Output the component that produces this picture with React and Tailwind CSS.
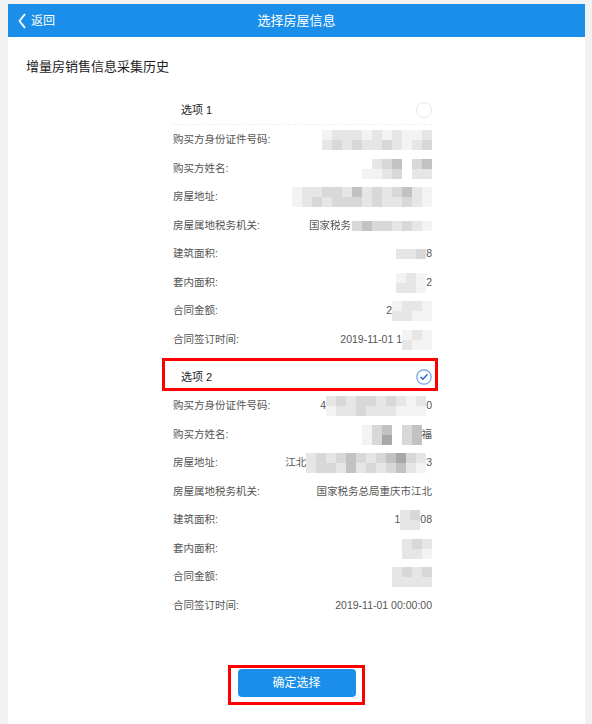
import React from 'react';

const A = 'bg-[#f3f3f3]';
const B = 'bg-[#e6e6e6]';
const C = 'bg-[#d8d8d8]';
const D = 'bg-[#c2c2c2]';
const E = 'bg-[#a8a8a8]';
const W = 'bg-white';

function Mosaic({ rows }) {
  return (
    <div className="flex flex-col blur-[0.5px]">
      {rows.map((r, i) => (
        <div key={i} className="flex">
          {r.map((c, j) => (
            <div key={j} className={`w-[10px] h-[10px] ${c}`} />
          ))}
        </div>
      ))}
    </div>
  );
}

function Row({ label, children }) {
  return (
    <div className="flex h-[28.5px] items-center justify-between pl-[1px]">
      <span className="text-[10.5px] text-[#555]">{label}</span>
      <div className="flex items-center text-[10.5px] text-[#555]">{children}</div>
    </div>
  );
}

function EmptyCircle() {
  return <div className="w-[16px] h-[16px] rounded-full border border-[#e6e6e6]" />;
}

function CheckCircle() {
  return (
    <svg width="16" height="16" viewBox="0 0 16 16">
      <circle cx="8" cy="8" r="7.2" fill="white" stroke="#6a9fe0" strokeWidth="1.2" />
      <path d="M5 8.3 L7 10.2 L11 5.8" fill="none" stroke="#2f6fd3" strokeWidth="1.6" strokeLinecap="round" strokeLinejoin="round" />
    </svg>
  );
}

export default function App() {
  return (
    <div className="min-h-screen bg-[#f2f2f2] pt-[4px] pl-[8px] pr-[7px] font-['Liberation_Sans','Noto_Sans_CJK_SC',sans-serif]">
      <div className="bg-white h-[720px] flex flex-col">
        <div className="h-[33px] bg-[#1a8ee8] grid grid-cols-[1fr_auto_1fr] items-center text-white">
          <div className="flex items-center pl-[10px] gap-[5px]">
            <svg width="8" height="16" viewBox="0 0 8 16">
              <path d="M7 1 L1.5 8 L7 15" fill="none" stroke="white" strokeWidth="2" strokeLinejoin="round" />
            </svg>
            <span className="text-[12px]">返回</span>
          </div>
          <div className="text-[13px]">选择房屋信息</div>
          <div />
        </div>

        <div className="pt-[20px] pl-[18px] text-[13px] leading-[20px] text-[#222]">增量房销售信息采集历史</div>

        <div className="mt-[19px] ml-[164px] w-[260px]">
          <div className="h-[29px] flex items-center justify-between border-b border-dashed border-[#f0f0f0] pl-[9px]">
            <span className="text-[11px] text-[#222]">选项 1</span>
            <EmptyCircle />
          </div>
          <div className="pt-[1px]">
            <Row label="购买方身份证件号码:">
              <Mosaic rows={[[A, B, B, B, A, B, A, B, A, A, B], [B, C, B, C, B, B, C, B, A, B, C]]} />
            </Row>
            <Row label="购买方姓名:">
              <Mosaic rows={[[W, B, C, D, W, C, D], [A, A, B, C, W, B, B]]} />
            </Row>
            <Row label="房屋地址:">
              <Mosaic rows={[[A, B, B, C, C, B, D, B, C, B, C, D, B, A], [A, B, C, B, C, C, C, B, C, B, B, C, B, A]]} />
            </Row>
            <Row label="房屋属地税务机关:">
              <span className="blur-[0.3px] mr-[1px]">国家税务</span>
              <Mosaic rows={[[C, D, C, C, B, C, B, A]]} />
            </Row>
            <Row label="建筑面积:">
              <Mosaic rows={[[B, B, C]]} />
              <span>8</span>
            </Row>
            <Row label="套内面积:">
              <Mosaic rows={[[A, B, A], [B, B, A]]} />
              <span>2</span>
            </Row>
            <Row label="合同金额:">
              <span>2</span>
              <Mosaic rows={[[A, B, B, A], [B, B, A, A]]} />
            </Row>
            <Row label="合同签订时间:">
              <span>2019-11-01 1</span>
              <Mosaic rows={[[A, B, A], [B, A, A]]} />
            </Row>
          </div>

          <div className="mt-[7px] relative h-[30px] flex items-center justify-between pt-[2px] pl-[9px] pr-0">
            <span className="text-[11px] text-[#222]">选项 2</span>
            <CheckCircle />
            <div className="absolute -left-[10px] -right-[6px] -top-[3px] bottom-0 border-[3px] border-[#ff0000]" />
          </div>
          <div className="pt-[1px]">
            <Row label="购买方身份证件号码:">
              <span>4</span>
              <Mosaic rows={[[B, C, B, C, C, B, C, B, A, B], [A, B, B, C, B, B, B, A, A, A]]} />
              <span>0</span>
            </Row>
            <Row label="购买方姓名:">
              <Mosaic rows={[[A, C, D, W, C, D], [A, C, E, W, C, D]]} />
              <span>福</span>
            </Row>
            <Row label="房屋地址:">
              <span>江北</span>
              <Mosaic rows={[[B, C, B, C, D, C, B, C, D, E, C, B], [B, C, C, B, D, B, C, B, C, D, B, A]]} />
              <span>3</span>
            </Row>
            <Row label="房屋属地税务机关:">
              <span>国家税务总局重庆市江北</span>
            </Row>
            <Row label="建筑面积:">
              <span>1</span>
              <Mosaic rows={[[B, C], [B, B]]} />
              <span>08</span>
            </Row>
            <Row label="套内面积:">
              <Mosaic rows={[[B, C, B], [B, B, A]]} />
            </Row>
            <Row label="合同金额:">
              <Mosaic rows={[[B, C, B, C], [B, B, B, B]]} />
            </Row>
            <Row label="合同签订时间:">
              <span>2019-11-01 00:00:00</span>
            </Row>
          </div>
        </div>

        <div className="mt-[49px] flex justify-center">
          <div className="relative">
            <button className="w-[118px] h-[28px] rounded-[4px] bg-[#1a8ee8] text-white text-[12px]">确定选择</button>
            <div className="absolute -left-[10px] -right-[9px] -top-[4px] -bottom-[8px] border-[3px] border-[#ff0000]" />
          </div>
        </div>
      </div>
    </div>
  );
}
